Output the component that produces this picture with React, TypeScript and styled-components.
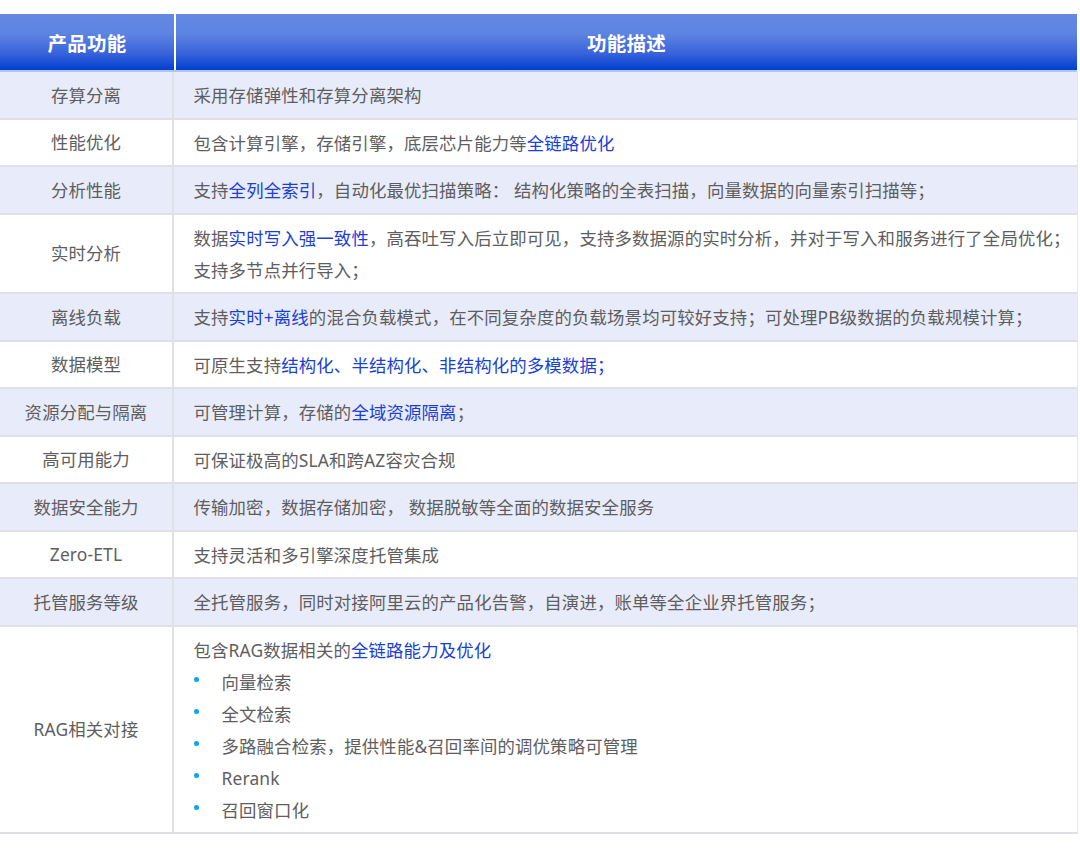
import React from "react";
import styled, { createGlobalStyle } from "styled-components";

const Global = createGlobalStyle`
  html, body { margin: 0; padding: 0; background: #ffffff; }
  body { font-family: "Noto Sans", "Noto Sans CJK SC", sans-serif; }
`;

const Page = styled.div`
  padding-top: 14px;
  width: 1080px;
`;

const Table = styled.div`
  width: 1078px;
  display: flex;
  flex-direction: column;
`;

const HeaderRow = styled.div`
  display: grid;
  grid-template-columns: 174px 1fr;
  column-gap: 2px;
  height: 56px;
  border-bottom: 2px solid #b4c5f1;
  margin-right: 1px;
`;

const HeaderCell = styled.div`
  display: flex;
  align-items: center;
  justify-content: center;
  color: #ffffff;
  font-size: 19.5px;
  font-weight: 700;
  letter-spacing: 0.2px;
  background: linear-gradient(180deg, #6389e2 0%, #5d84e1 35%, #3a63db 70%, #0040d0 100%);
`;

const Row = styled.div<{ $shaded: boolean }>`
  display: grid;
  grid-template-columns: 174px 1fr;
  background: ${(p) => (p.$shaded ? "#e8ebf9" : "#ffffff")};
  border-bottom: 2px solid #dfe0e6;
  border-right: 1px solid #e6e7ec;
`;

const NameCell = styled.div`
  display: flex;
  align-items: center;
  justify-content: center;
  border-right: 2px solid #e0e1e6;
  color: #5e5e5e;
  font-size: 17.4px;
  letter-spacing: 0.15px;
  line-height: 32px;
  text-align: center;
`;

const DescCell = styled.div`
  padding: 7px 0 6.5px 19.5px;
  color: #5e5e5e;
  font-size: 17.4px;
  letter-spacing: 0.15px;
  line-height: 32px;
  white-space: nowrap;
  overflow: hidden;
`;

const Hl = styled.span`
  color: #1a3fd6;
`;

const Item = styled.div`
  display: flex;
  align-items: center;
`;

const Bullet = styled.span`
  width: 28px;
  flex: none;
  display: flex;
  align-items: center;
  height: 32px;
  &::before {
    content: "";
    display: block;
    width: 5px;
    height: 5px;
    border-radius: 50%;
    background: #10a3e8;
    margin-left: 0px;
    margin-top: -5px;
  }
`;

type RowData = { name: string; desc: React.ReactNode };

const rows: RowData[] = [
  { name: "存算分离", desc: "采用存储弹性和存算分离架构" },
  { name: "性能优化", desc: <>包含计算引擎，存储引擎，底层芯片能力等<Hl>全链路优化</Hl></> },
  { name: "分析性能", desc: <>支持<Hl>全列全索引</Hl>，自动化最优扫描策略： 结构化策略的全表扫描，向量数据的向量索引扫描等；</> },
  {
    name: "实时分析",
    desc: (
      <>
        数据<Hl>实时写入强一致性</Hl>，高吞吐写入后立即可见，支持多数据源的实时分析，并对于写入和服务进行了全局优化；
        <br />
        支持多节点并行导入；
      </>
    ),
  },
  { name: "离线负载", desc: <>支持<Hl>实时+离线</Hl>的混合负载模式，在不同复杂度的负载场景均可较好支持；可处理PB级数据的负载规模计算；</> },
  { name: "数据模型", desc: <>可原生支持<Hl>结构化、半结构化、非结构化的多模数据；</Hl></> },
  { name: "资源分配与隔离", desc: <>可管理计算，存储的<Hl>全域资源隔离</Hl>；</> },
  { name: "高可用能力", desc: "可保证极高的SLA和跨AZ容灾合规" },
  { name: "数据安全能力", desc: "传输加密，数据存储加密， 数据脱敏等全面的数据安全服务" },
  { name: "Zero-ETL", desc: "支持灵活和多引擎深度托管集成" },
  { name: "托管服务等级", desc: "全托管服务，同时对接阿里云的产品化告警，自演进，账单等全企业界托管服务；" },
  {
    name: "RAG相关对接",
    desc: (
      <>
        <div>包含RAG数据相关的<Hl>全链路能力及优化</Hl></div>
        {["向量检索", "全文检索", "多路融合检索，提供性能&召回率间的调优策略可管理", "Rerank", "召回窗口化"].map((t) => (
          <Item key={t}>
            <Bullet />
            <span>{t}</span>
          </Item>
        ))}
      </>
    ),
  },
];

export default function App() {
  return (
    <Page>
      <Global />
      <Table>
        <HeaderRow>
          <HeaderCell>产品功能</HeaderCell>
          <HeaderCell>功能描述</HeaderCell>
        </HeaderRow>
        {rows.map((r, i) => (
          <Row key={r.name} $shaded={i % 2 === 0}>
            <NameCell>{r.name}</NameCell>
            <DescCell>{r.desc}</DescCell>
          </Row>
        ))}
      </Table>
    </Page>
  );
}
